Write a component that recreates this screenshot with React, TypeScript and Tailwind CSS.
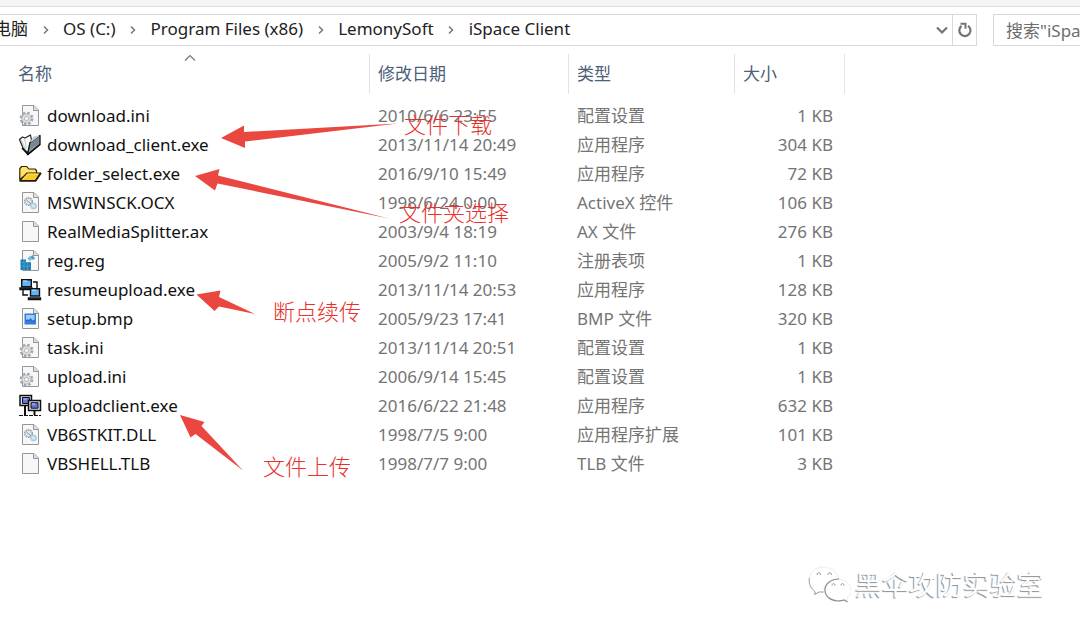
import React from 'react';

type IconKind = 'ini' | 'book' | 'folder' | 'dll' | 'blank' | 'reg' | 'network' | 'bitmap' | 'monitors';

interface FileEntry {
  name: string;
  date: string;
  type: string;
  size: string;
  icon: IconKind;
}

const files: FileEntry[] = [
  { name: 'download.ini', date: '2010/6/6 23:55', type: '配置设置', size: '1 KB', icon: 'ini' },
  { name: 'download_client.exe', date: '2013/11/14 20:49', type: '应用程序', size: '304 KB', icon: 'book' },
  { name: 'folder_select.exe', date: '2016/9/10 15:49', type: '应用程序', size: '72 KB', icon: 'folder' },
  { name: 'MSWINSCK.OCX', date: '1998/6/24 0:00', type: 'ActiveX 控件', size: '106 KB', icon: 'dll' },
  { name: 'RealMediaSplitter.ax', date: '2003/9/4 18:19', type: 'AX 文件', size: '276 KB', icon: 'blank' },
  { name: 'reg.reg', date: '2005/9/2 11:10', type: '注册表项', size: '1 KB', icon: 'reg' },
  { name: 'resumeupload.exe', date: '2013/11/14 20:53', type: '应用程序', size: '128 KB', icon: 'network' },
  { name: 'setup.bmp', date: '2005/9/23 17:41', type: 'BMP 文件', size: '320 KB', icon: 'bitmap' },
  { name: 'task.ini', date: '2013/11/14 20:51', type: '配置设置', size: '1 KB', icon: 'ini' },
  { name: 'upload.ini', date: '2006/9/14 15:45', type: '配置设置', size: '1 KB', icon: 'ini' },
  { name: 'uploadclient.exe', date: '2016/6/22 21:48', type: '应用程序', size: '632 KB', icon: 'monitors' },
  { name: 'VB6STKIT.DLL', date: '1998/7/5 9:00', type: '应用程序扩展', size: '101 KB', icon: 'dll' },
  { name: 'VBSHELL.TLB', date: '1998/7/7 9:00', type: 'TLB 文件', size: '3 KB', icon: 'blank' },
];

const crumbs = ['电脑', 'OS (C:)', 'Program Files (x86)', 'LemonySoft', 'iSpace Client'];

function Page() {
  return (
    <g stroke="#969696" strokeWidth="1">
      <path d="M4.5 1.5h11.5l4.5 4.5v15.5h-16z" fill="#f7f7f7" />
      <path d="M15.5 1.5v5h5" fill="#dedede" />
    </g>
  );
}

function FileIcon({ kind }: { kind: IconKind }) {
  return (
    <svg viewBox="0 0 24 24" className="h-6 w-6 shrink-0" aria-hidden="true">
      {['ini', 'dll', 'blank', 'reg', 'bitmap'].includes(kind) && <Page />}
      {kind === 'ini' && (
        <g fill="none">
          <circle cx="8.500" cy="14.500" r="5.700" stroke="#a3a8ab" strokeWidth="2.400" strokeDasharray="2.500 1.977" />
          <circle cx="8.500" cy="14.500" r="4.600" fill="#dfe3e5" stroke="#a5aaad" strokeWidth=".8" />
          <circle cx="8.500" cy="14.500" r="2.100" fill="#fafafa" stroke="#a0a5a8" strokeWidth=".8" />
        </g>
      )}
      {kind === 'dll' && (
        <g fill="none">
          <circle cx="10.500" cy="10.500" r="3.800" stroke="#8f979d" strokeWidth="1.300" strokeDasharray="1.600 .8" />
          <circle cx="10.500" cy="10.500" r="3.200" fill="#e2e7ea" stroke="#a8afb4" strokeWidth=".7" />
          <path d="M8.500 9l5 4.500" stroke="#8c959b" />
          <circle cx="15.500" cy="15" r="3" fill="#bcdcec" stroke="#96bfd4" strokeWidth=".7" />
          <circle cx="15.500" cy="15" r="1.100" fill="#e5f3fa" />
        </g>
      )}
      {kind === 'reg' && (
        <g>
          <path d="M2.500 10.500h5.500v2.500h5v8H2.500z" fill="#1e7fb7" />
          <path d="M2.500 13.500h10.500M2.500 17.200h10.500M6 10.500v10.500M9.500 13v8" stroke="#5badd3" strokeWidth=".6" />
          <path d="M9.500 9.500l2.500-2.500 2.500 2.500-2.500 2.500z" fill="#78b8da" />
          <path d="M12.500 7.500l2.200-1.500 2.300 3.500-2.200 1.500z" fill="#4d9bc6" />
        </g>
      )}
      {kind === 'bitmap' && (
        <g>
          <path d="M6.500 6.500h11.500v11h-11.500z" fill="#347edb" />
          <path d="M8 8h8.500v5l-1-.5-1 1.500-2-3-1.500 2.500-1.500-1.500-1.500 1z" fill="#9ecbfa" />
          <path d="M8 13.500l2-.500 1 1 1.500-2.500 2 3 2-1" fill="none" stroke="#2255b2" strokeWidth=".8" />
        </g>
      )}
      {kind === 'book' && (
        <g strokeLinejoin="round">
          <path d="M1.500 6.500l3-2.500L7 5l5.500-3 1 5-3.500 13-5-5z" fill="#f7f8f8" stroke="#222" strokeWidth="1.200" />
          <path d="M9.500 21.500l2.500-12L22 2.500v9z" fill="#8b9ba5" stroke="#111" strokeWidth="1.300" />
          <path d="M12 16l1.500-6 7.500-5.500v6z" fill="#778791" />
          <path d="M12 9l3.500-5.500 4.500-1 1.500.5-7.500 5.500z" fill="#c4ced4" />
          <path d="M3 7l5.500 11M6.500 6l2 9" fill="none" stroke="#c3c8ca" />
          <path d="M4 15l6 6.500 12-10" fill="none" stroke="#111" strokeWidth="1.500" />
        </g>
      )}
      {kind === 'folder' && (
        <g stroke="#302500" strokeWidth="1.200" strokeLinejoin="round">
          <path d="M1.800 17.500V6.500l2-2h5l2 2.500h6.200l1.500 1.500v3.500H9z" fill="#ffe36a" />
          <path d="M2 18.500l7-7.500h13.500l-5 7.500z" fill="#f8ca28" />
          <path d="M1.500 19h16l5.500-8" fill="none" stroke="#1f1800" strokeWidth="1.600" />
          <path d="M5 17l4.500-5h10" fill="none" stroke="#ffef91" strokeWidth=".8" />
        </g>
      )}
      {kind === 'network' && (
        <g stroke="#111" strokeWidth="1.400">
          <path d="M3.700 1.700h9.600v7H3.700z" fill="#62b3f8" />
          <path d="M2 10h12v1.600H2z" fill="#444" />
          <path d="M15 4h4v6M5 12v5h5" fill="none" />
          <path d="M12.500 10.700h9v7.300h-9z" fill="#62b3f8" />
          <path d="M10.500 20h12v1.600h-12z" fill="#444" />
          <path d="M5 3h4M14 12.200h4" stroke="#c5e6ff" strokeWidth="1" />
        </g>
      )}
      {kind === 'monitors' && (
        <g stroke="#101010">
          <path d="M7 12v9M16.500 17v4" fill="none" strokeWidth="2" />
          <path d="M1 21.500h9M11 21.500h12" fill="none" strokeWidth="1.200" strokeDasharray="4 1" />
          <path d="M2 1.500h11.500v10H2z" fill="#dfdfdf" strokeWidth="1.500" />
          <path d="M4.500 3.500h7v6h-7z" fill="#6075e6" strokeWidth="1" />
          <path d="M10.500 6.500h12v10h-12z" fill="#dfdfdf" strokeWidth="1.500" />
          <path d="M13 8.700h7v5.500h-7z" fill="#6075e6" strokeWidth="1" />
          <path d="M14 10h3M5.500 5h3" stroke="#bdc8ff" />
        </g>
      )}
    </svg>
  );
}

function Chevron() {
  return (
    <svg viewBox="0 0 8 10" className="h-[10px] w-2 shrink-0" aria-hidden="true">
      <path d="M2 1.500l3.500 3.500L2 8.500" fill="none" stroke="#777" strokeWidth="1.500" />
    </svg>
  );
}

function AddressBar() {
  return (
    <div className="flex gap-4 pt-[7px]">
      <nav aria-label="路径" className="flex h-8 min-w-0 flex-1 items-stretch overflow-hidden border border-l-0 border-[#d9d9d9] text-[#222]">
        <ol className="-ml-[6px] flex min-w-0 flex-1 items-center pb-[2px]">
          {crumbs.map((crumb, i) => (
            <li key={crumb} className="flex items-center whitespace-nowrap">
              {i > 0 && <span className="flex w-[35px] justify-center pt-[2px]"><Chevron /></span>}
              <a href="#">{crumb}</a>
            </li>
          ))}
        </ol>
        <button type="button" aria-label="以前的位置" className="flex w-5 items-center justify-center">
          <svg viewBox="0 0 14 10" className="h-[10px] w-[14px]">
            <path d="M2 2.500l5 5 5-5" fill="none" stroke="#737373" strokeWidth="2.200" />
          </svg>
        </button>
        <button type="button" aria-label="刷新" className="flex w-6 items-center justify-center border-l border-[#d9d9d9]">
          <svg viewBox="0 0 16 18" className="h-[18px] w-4" fill="none" stroke="#737373" strokeWidth="2.200">
            <path d="M11 4.800A5.600 5.600 0 1 1 4.500 5" />
            <path d="M3.500 2.800h5v5" strokeWidth="2" />
          </svg>
        </button>
      </nav>
      <input
        type="text"
        aria-label="搜索"
        placeholder={'搜索"iSpace Client"'}
        className="h-8 w-[87px] border border-r-0 border-[#d9d9d9] bg-white pl-3 text-[#6d6d6d] outline-none placeholder:text-[#6d6d6d]"
      />
    </div>
  );
}

function FileTable() {
  const head = 'h-10 border-r border-[#e2e2e2] p-0 text-left font-normal';
  return (
    <table className="mt-2 w-[845px] table-fixed border-separate border-spacing-0">
      <colgroup>
        <col className="w-[370px]" />
        <col className="w-[199px]" />
        <col className="w-[166px]" />
        <col className="w-[110px]" />
      </colgroup>
      <thead className="text-[#4c607a]">
        <tr>
          <th className={head} aria-sort="ascending">
            <div className="relative pl-[18px]">
              名称
              <svg viewBox="0 0 12 8" className="absolute -top-2 left-[184px] h-2 w-3" aria-hidden="true">
                <path d="M1 6.500l5-5 5 5" fill="none" stroke="#777" strokeWidth="1.200" />
              </svg>
            </div>
          </th>
          <th className={head}><div className="pl-2">修改日期</div></th>
          <th className={head}><div className="pl-2">类型</div></th>
          <th className={head}><div className="pl-2">大小</div></th>
        </tr>
      </thead>
      <tbody className="text-[#747474] before:block before:h-[7px]">
        {files.map((file) => (
          <tr key={file.name} className="whitespace-nowrap">
            <td className="h-[29px] p-0 text-[#111]">
              <div className="flex items-center gap-[5px] pl-[18px]">
                <FileIcon kind={file.icon} />
                {file.name}
              </div>
            </td>
            <td className="p-0 pl-2">{file.date}</td>
            <td className="p-0 pl-2">{file.type}</td>
            <td className="p-0 pr-3 text-right">{file.size}</td>
          </tr>
        ))}
      </tbody>
    </table>
  );
}

function Annotations() {
  const note = 'absolute whitespace-nowrap';
  return (
    <div className="pointer-events-none absolute top-0 left-0 h-[500px] w-[560px] text-[22px] leading-7 font-light text-[#e9302b]">
      <svg viewBox="0 0 560 500" className="h-full w-full" fill="#e9473f" aria-hidden="true">
        <path d="M221 138L244 125.500V132L398 123.500 245 141.500V148z" />
        <path d="M195 176L219.500 169 218 175.500 389 218.500 217.500 183.500 215 190.500z" />
        <path d="M196.500 294.500L220.500 290.500 219 297 255 314 219 306.500 214.500 311z" />
        <path d="M180 415L204.500 422 201.500 426 243 470.500 195.500 434 190.500 437.500z" />
      </svg>
      <span className={`${note} top-[110px] left-[404px]`}>文件下载</span>
      <span className={`${note} top-[198px] left-[399px]`}>文件夹选择</span>
      <span className={`${note} top-[297px] left-[273px]`}>断点续传</span>
      <span className={`${note} top-[452px] left-[263px]`}>文件上传</span>
    </div>
  );
}

function Watermark() {
  return (
    <div className="absolute right-9 bottom-7 flex items-center gap-1 text-[27px] leading-10 font-normal text-white [text-shadow:-1px_1px_1px_#8d8d8d]">
      <svg viewBox="0 0 44 40" className="h-10 w-11" fill="#fff" aria-hidden="true">
        <path d="M8 27c-4-3-6-6.500-6-11C2 8 8 2 16.500 2S31 8 32 14c-9 0-15 5-15 11l.5 2c-2 .3-4 0-5.500-.5L7 29.500z" stroke="#ededed" />
        <path d="M2.500 13c-1 5 1 10.500 6 14l-1 2.500 5-2.500h4" fill="none" stroke="#a0a0a0" />
        <path d="M37 34.500c-2 .9-4 1.500-6.500 1.500C23 36 18 31 18 25s5.500-11 12.500-11S44 19 44 25c0 3.500-1.500 6-4.500 8l1.500 4z" stroke="#ededed" />
        <path d="M32 14c-8 0-14 5-14 11s5 10.500 12.500 11c2.500 0 4-.5 6.500-1l3.500 2" fill="none" stroke="#8f8f8f" strokeWidth="1.200" />
        <path d="M10 10c0-3 3.500-3 3.500 0M21 10c0-3 3.500-3 3.500 0M25 20.500c0-2.500 3-2.500 3 0M34 20.500c0-2.500 3-2.500 3 0" fill="none" stroke="#929292" />
      </svg>
      <span className="whitespace-nowrap">黑伞攻防实验室</span>
    </div>
  );
}

export default function App() {
  return (
    <div className="relative min-h-screen overflow-hidden bg-white font-['Noto_Sans','Noto_Sans_CJK_SC',sans-serif] text-[17px] leading-6">
      <div className="h-[7px] border-b border-[#dedede] bg-[#f5f5f5]" />
      <AddressBar />
      <FileTable />
      <Annotations />
      <Watermark />
    </div>
  );
}
